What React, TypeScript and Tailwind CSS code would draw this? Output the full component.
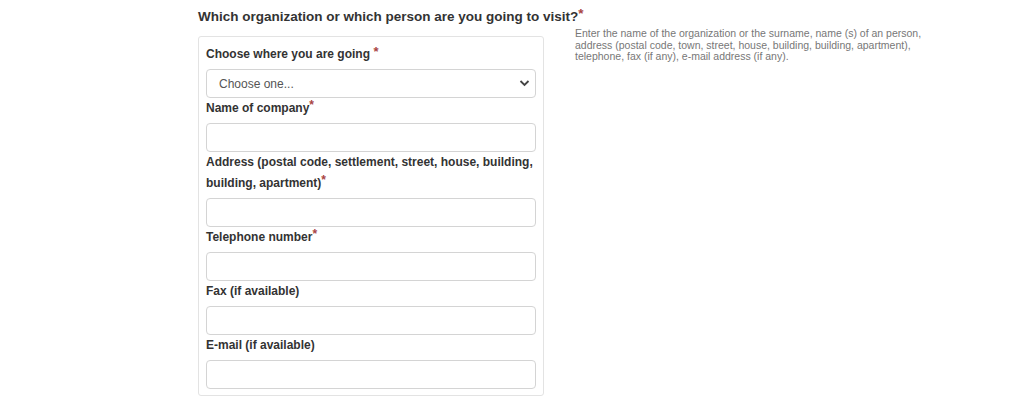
export default function App() {
  const fields = [
    { label: "Name of company", required: true },
    {
      label: "Address (postal code, settlement, street, house, building, building, apartment)",
      required: true,
    },
    { label: "Telephone number", required: true },
    { label: "Fax (if available)", required: false },
    { label: "E-mail (if available)", required: false },
  ];

  return (
    <div className="w-[1024px] min-h-[405px] bg-white font-['Liberation_Sans',Arial,sans-serif] text-[#333]">
      <div className="flex pl-[198px]">
        {/* left column */}
        <div className="w-[346px] shrink-0">
          <h3 className="whitespace-nowrap pt-[7px] text-[13.5px] font-bold leading-[19px] text-[#333]">
            Which organization or which person are you going to visit?
            <span className="align-[3px] leading-none text-[#a94442]">*</span>
          </h3>

          <div className="mt-[10px] rounded-[3px] border border-[#e3e3e3] px-[7px] pt-[7px] pb-[6px]">
            <label className="mb-1 block text-[12px] font-bold leading-[21px]">
              Choose where you are going{" "}
              <span className="align-[2px] text-[13px] leading-none text-[#a94442]">*</span>
            </label>
            <div className="relative">
              <select className="h-[29px] w-full appearance-none rounded-[4px] border border-[#d4d4d4] bg-white pl-[12px] text-[12px] text-[#555] outline-none">
                <option>Choose one...</option>
              </select>
              <svg
                className="pointer-events-none absolute right-[6px] top-[10px]"
                width="11"
                height="8"
                viewBox="0 0 11 8"
              >
                <path d="M1.5 2 L5.5 6 L9.5 2" fill="none" stroke="#444" strokeWidth="1.8" />
              </svg>
            </div>

            {fields.map((f) => (
              <div key={f.label}>
                <label className="mb-1 block text-[12px] font-bold leading-[21px]">
                  {f.label}
                  {f.required && (
                    <span className="align-[3px] leading-none text-[#a94442]">*</span>
                  )}
                </label>
                <input
                  type="text"
                  className="block h-[29px] w-full rounded-[4px] border border-[#d4d4d4] bg-white px-3 text-[12px] outline-none"
                />
              </div>
            ))}
          </div>
        </div>

        {/* help text */}
        <div className="ml-[31px] w-[360px] pt-[28px] text-[10.5px] leading-[11.5px] text-[#777]">
          Enter the name of the organization or the surname, name (s) of an person,
          address (postal code, town, street, house, building, building, apartment),
          telephone, fax (if any), e-mail address (if any).
        </div>
      </div>
    </div>
  );
}
